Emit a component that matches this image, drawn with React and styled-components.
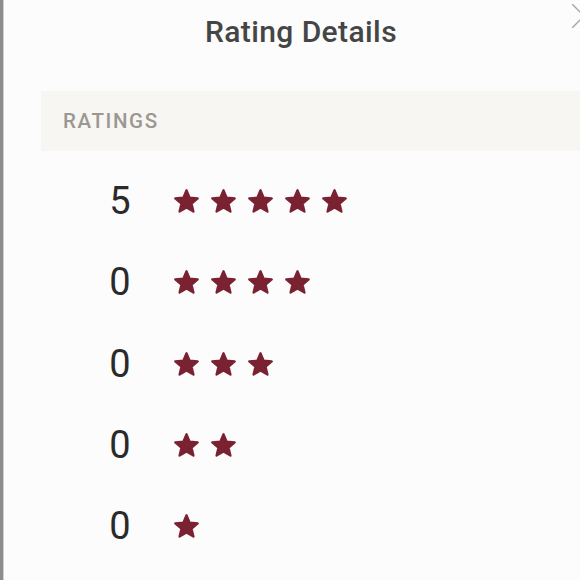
import React from "react";
import styled, { createGlobalStyle } from "styled-components";

const Global = createGlobalStyle`
  html, body {
    margin: 0;
    padding: 0;
    overflow: hidden;
    background: #fcfcfc;
    font-family: Roboto, "Liberation Sans", sans-serif;
  }
`;

const Page = styled.div`
  display: flex;
  width: 580px;
  height: 580px;
  overflow: hidden;
`;

const Strip = styled.div`
  flex: 0 0 3px;
  background: #8d8d8d;
  border-right: 1px solid #cfcfcf;
`;

const Dialog = styled.div`
  position: relative;
  flex: 0 0 594px;
  width: 594px;
  background: #fcfcfc;
  padding-top: 15px;
`;

const Title = styled.h2`
  margin: 0 0 42px;
  font-size: 30px;
  line-height: 34px;
  font-weight: 500;
  color: #454545;
  text-align: center;
  letter-spacing: 0.4px;
`;

const Close = styled.button`
  position: absolute;
  top: 4px;
  right: 2px;
  width: 24px;
  height: 24px;
  padding: 0;
  border: none;
  background: transparent;
  display: flex;
`;

const SectionHeader = styled.div`
  margin-left: 37px;
  height: 60px;
  display: flex;
  align-items: center;
  padding-left: 22px;
  background: #f7f6f3;
  font-size: 20.5px;
  font-weight: 500;
  letter-spacing: 1.6px;
  color: #9b9791;
`;

const List = styled.div`
  padding-top: 10px;
  display: flex;
  flex-direction: column;
`;

const Row = styled.div`
  height: 81.3px;
  display: flex;
  align-items: center;
  padding-left: 96px;
`;

const Count = styled.span`
  width: 40px;
  margin-right: 33px;
  text-align: center;
  font-size: 38px;
  font-weight: 400;
  color: #2a2a2a;
  line-height: 1;
  padding-bottom: 1px;
`;

const Stars = styled.div`
  display: flex;
  gap: 10px;
`;

const StarSvg = styled.svg`
  width: 27px;
  height: 27px;
  display: block;
`;

const STAR =
  "M12 17.27L18.18 21l-1.64-7.03L22 9.24l-7.19-.61L12 2 9.19 8.63 2 9.24l5.46 4.73L5.82 21z";

const Star = () => (
  <StarSvg viewBox="0 0 24 24">
    <path
      d={STAR}
      fill="#7a2232"
      stroke="#7a2232"
      strokeWidth="2"
      strokeLinejoin="round"
    />
  </StarSvg>
);

const rows = [
  { stars: 5, count: 5 },
  { stars: 4, count: 0 },
  { stars: 3, count: 0 },
  { stars: 2, count: 0 },
  { stars: 1, count: 0 },
];

export default function App() {
  return (
    <>
      <Global />
      <Page>
        <Strip />
        <Dialog>
          <Title>Rating Details</Title>
          <Close aria-label="Close">
            <svg width="24" height="24" viewBox="0 0 24 24">
              <path
                d="M0 0L24 24M24 0L0 24"
                stroke="#a8a8a8"
                strokeWidth="1.5"
                fill="none"
              />
            </svg>
          </Close>
          <SectionHeader>RATINGS</SectionHeader>
          <List>
            {rows.map((r) => (
              <Row key={r.stars}>
                <Count>{r.count}</Count>
                <Stars>
                  {Array.from({ length: r.stars }).map((_, i) => (
                    <Star key={i} />
                  ))}
                </Stars>
              </Row>
            ))}
          </List>
        </Dialog>
      </Page>
    </>
  );
}
